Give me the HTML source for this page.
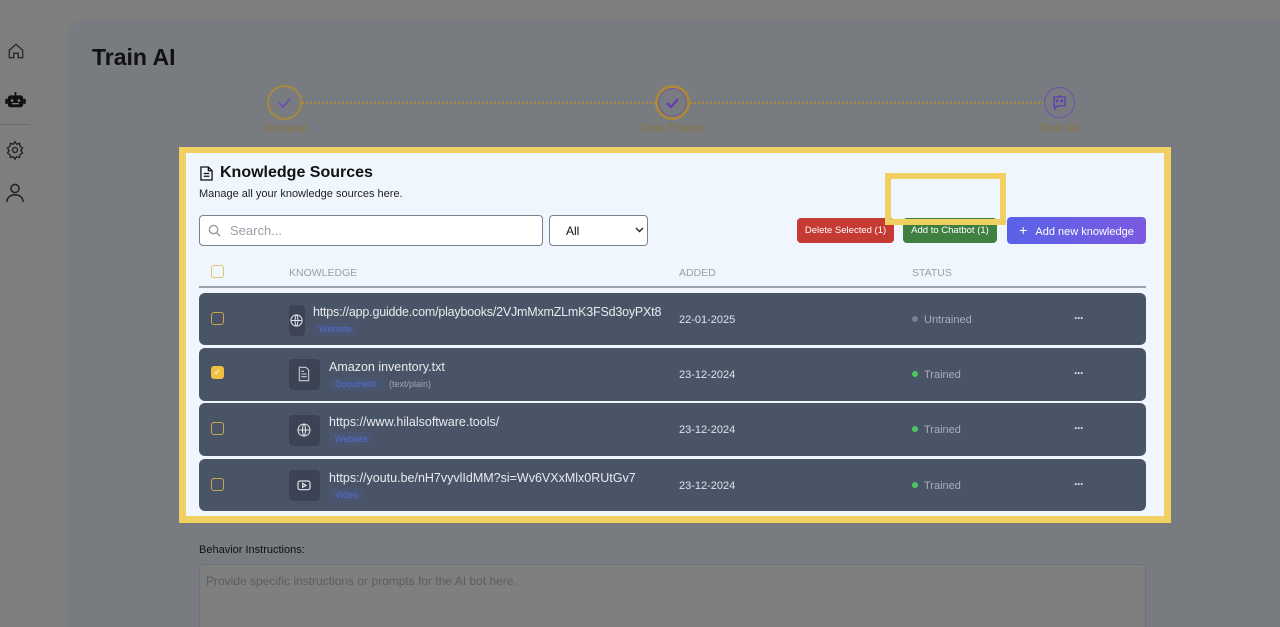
<!DOCTYPE html>
<html style="overflow:hidden;height:627px"><head><style>
*{box-sizing:border-box;margin:0;padding:0}
html,body{width:1280px;height:627px;overflow:hidden}
body{background:#7e7e7e;font-family:"Liberation Sans",sans-serif;position:relative}
.a{position:absolute}
.panel{left:68px;top:20px;width:1212px;height:607px;background:#787b80;border-radius:16px 0 0 0}
.row{position:absolute;left:199px;width:947px;background:#4a5467;border-radius:6px;color:#e6e8ec}
.cb{position:absolute;left:12px;width:13px;height:13px;border:1.5px solid #c9a64a;border-radius:3px}
.ic{position:absolute;left:90px;width:31px;height:31px;background:#3b4354;border-radius:4px}
.ic svg{position:absolute;left:7px;top:7px}
.t{position:absolute;font-size:12.5px;color:#e8eaee;white-space:nowrap}
.tag{position:absolute;font-size:9px;color:#4b6fd8;background:#4a5570;padding:2px 6px;border-radius:3px}
.date{position:absolute;left:480px;font-size:11px;color:#e0e3e8}
.st{position:absolute;left:713px;font-size:11px;color:#a9afb9}
.dot{display:inline-block;width:6px;height:6px;border-radius:50%;margin-right:6px;vertical-align:1px}
.more{position:absolute;left:875px;font-size:12px;color:#e5e7eb;letter-spacing:-1px;font-weight:bold}
.btn{position:absolute;top:218px;height:25px;border-radius:4px;color:#fff;font-size:9.5px;text-align:center;line-height:25px;white-space:nowrap}
</style></head><body>
<div class="a panel"></div>
<svg class="a" style="left:7px;top:42px" width="18" height="18" viewBox="0 0 24 24" fill="none" stroke="#222" stroke-width="1.6"><path d="M3 11l9-8 9 8v10h-6v-6h-6v6H3z"/></svg>
<svg class="a" style="left:5px;top:92px" width="21" height="17" viewBox="0 0 24 20"><rect x="11" y="0" width="2" height="4" fill="#111"/><rect x="3" y="4" width="18" height="14" rx="3" fill="#111"/><rect x="0" y="8" width="3" height="6" fill="#111"/><rect x="21" y="8" width="3" height="6" fill="#111"/><circle cx="8" cy="10" r="1.5" fill="#888"/><circle cx="16" cy="10" r="1.5" fill="#888"/><rect x="8" y="13" width="8" height="1.5" fill="#888"/></svg>
<div class="a" style="left:0;top:124px;width:30px;height:1px;background:#6d6d6d"></div>
<svg class="a" style="left:5px;top:140px" width="20" height="20" viewBox="0 0 24 24" fill="none" stroke="#222" stroke-width="1.6"><circle cx="12" cy="12" r="3"/><path d="M12 2l2 3 3.5-1 .5 3.5 3 2-2 3 2 3-3 2-.5 3.5-3.5-1-2 3-2-3-3.5 1L6 17.5l-3-2 2-3-2-3 3-2 .5-3.5 3.5 1z"/></svg>
<svg class="a" style="left:6px;top:183px" width="18" height="20" viewBox="0 0 20 22" fill="none" stroke="#222" stroke-width="1.7"><circle cx="10" cy="6" r="4.5"/><path d="M1 21c0-5 4-8 9-8s9 3 9 8"/></svg>

<div class="a" style="left:92px;top:44px;font-size:23px;font-weight:bold;color:#111">Train AI</div>
<div class="a" style="left:285px;top:102px;width:775px;border-top:2px dotted #a88a3a"></div>
<div class="a" style="left:267px;top:85px;width:35px;height:35px;border-radius:50%;border:2px solid #a88a3a;background:#787b80"></div>
<svg class="a" style="left:276px;top:94px" width="17" height="17" viewBox="0 0 17 17" fill="none" stroke="#7050b0" stroke-width="2"><path d="M3 9l4 4 7-8"/></svg>
<div class="a" style="left:264px;top:121px;font-size:12px;color:#8a7440">General</div>
<div class="a" style="left:655px;top:85px;width:35px;height:35px;border-radius:50%;border:3px solid #a88a3a;background:#787b80;box-shadow:inset 0 0 0 1px #7050b0"></div>
<svg class="a" style="left:664px;top:94px" width="17" height="17" viewBox="0 0 17 17" fill="none" stroke="#6040b0" stroke-width="2.2"><path d="M3 9l4 4 7-8"/></svg>
<div class="a" style="left:639px;top:121px;font-size:12px;color:#8a7440">Chat Theme</div>
<div class="a" style="left:1044px;top:87px;width:31px;height:31px;border-radius:50%;border:1.5px solid #7050b0;background:#787b80"></div>
<svg class="a" style="left:1050px;top:93px" width="19" height="19" viewBox="0 0 24 24" fill="none" stroke="#6040b0" stroke-width="1.8"><path d="M12 2v3M5 5h14v11H10l-4 4v-4H5z"/><circle cx="9" cy="10" r="1" fill="#6040b0"/><circle cx="15" cy="10" r="1" fill="#6040b0"/></svg>
<div class="a" style="left:1038px;top:121px;font-size:12px;color:#8a7440">Train AI</div>

<div class="a" style="left:179px;top:147px;width:992px;height:376px;background:#f0d060"></div>
<div class="a" style="left:186px;top:153px;width:978px;height:363px;background:#eff6fd"></div>
<svg class="a" style="left:200px;top:166px" width="13" height="15" viewBox="0 0 14 16" fill="none" stroke="#111" stroke-width="1.4"><path d="M1 1h8l4 4v10H1z M9 1v4h4 M4 8h6 M4 11h6"/></svg>
<div class="a" style="left:220px;top:164px;font-size:16px;font-weight:bold;color:#111">Knowledge Sources</div>
<div class="a" style="left:199px;top:188px;font-size:11px;color:#222">Manage all your knowledge sources here.</div>
<div class="a" style="left:199px;top:215px;width:344px;height:31px;background:#fff;border:1.5px solid #7a8290;border-radius:4px"></div>
<svg class="a" style="left:208px;top:224px" width="13" height="13" viewBox="0 0 14 14" fill="none" stroke="#999" stroke-width="1.5"><circle cx="6" cy="6" r="4.5"/><path d="M9.5 9.5L13 13"/></svg>
<div class="a" style="left:230px;top:223px;font-size:13px;color:#9aa0a8">Search...</div>
<div class="a" style="left:549px;top:215px;width:99px;height:31px;background:#fff;border:1.5px solid #7a8290;border-radius:4px"></div>
<div class="a" style="left:566px;top:224px;font-size:12px;color:#111">All</div>
<svg class="a" style="left:635px;top:227px" width="9" height="6" viewBox="0 0 9 6" fill="none" stroke="#222" stroke-width="1.4"><path d="M1 1l3.5 3.5L8 1"/></svg>

<div class="btn" style="left:797px;width:97px;background:#c53a32">Delete Selected (1)</div>
<div class="btn" style="left:903px;width:94px;background:#3f8040">Add to Chatbot (1)</div>
<div class="btn" style="left:1007px;top:217px;width:139px;height:27px;line-height:27px;background:linear-gradient(90deg,#5a62e8,#7a5ae0);font-size:11px"><span style="font-size:14px;margin-right:8px">+</span>Add new knowledge</div>
<div class="a" style="left:885px;top:173px;width:121px;height:52px;border:6px solid #f0d060"></div>

<div class="a" style="left:211px;top:265px;width:13px;height:13px;border:1.5px solid #e4c36a;border-radius:3px"></div>
<div class="a" style="left:289px;top:267px;font-size:10.5px;color:#9aa0aa">KNOWLEDGE</div>
<div class="a" style="left:679px;top:267px;font-size:10.5px;color:#9aa0aa">ADDED</div>
<div class="a" style="left:912px;top:267px;font-size:10.5px;color:#9aa0aa">STATUS</div>
<div class="a" style="left:199px;top:286px;width:947px;height:2px;background:#9aa2ae"></div>

<div class="row" style="top:293px;height:52px">
<div class="cb" style="top:19px"></div>
<div class="ic" style="top:12px;width:16px;height:31px"><svg style="left:0;top:8px" width="15" height="15" viewBox="0 0 24 24" fill="none" stroke="#e0e3e8" stroke-width="1.6"><circle cx="12" cy="12" r="9"/><path d="M3 12h18M12 3c3 3 3 15 0 18M12 3c-3 3-3 15 0 18"/></svg></div>
<div class="t" style="left:114px;top:12px;letter-spacing:-0.2px">https://app.guidde.com/playbooks/2VJmMxmZLmK3FSd3oyPXt8</div>
<div class="tag" style="left:114px;top:29px">Website</div>
<div class="date" style="top:21px">22-01-2025</div>
<div class="st" style="top:21px"><span class="dot" style="background:#7c828c"></span>Untrained</div>
<div class="more" style="top:18px">···</div></div>

<div class="row" style="top:348px;height:53px">
<div class="cb" style="top:18px;background:#f0c040;border-color:#f0c040;color:#fff;font-size:9px;line-height:10px;text-align:center">✓</div>
<div class="ic" style="top:11px"><svg width="16" height="16" viewBox="0 0 24 24" fill="none" stroke="#c9ced6" stroke-width="1.6"><path d="M5 2h10l4 4v16H5z M8 12h8 M8 16h8 M8 8h4"/></svg></div>
<div class="t" style="left:130px;top:12px">Amazon inventory.txt</div>
<div class="tag" style="left:130px;top:29px">Document</div>
<div class="a" style="left:190px;top:31px;font-size:9px;color:#a0a6b0">(text/plain)</div>
<div class="date" style="top:21px">23-12-2024</div>
<div class="st" style="top:21px"><span class="dot" style="background:#4cc860"></span>Trained</div>
<div class="more" style="top:18px">···</div></div>

<div class="row" style="top:403px;height:53px">
<div class="cb" style="top:19px"></div>
<div class="ic" style="top:12px"><svg width="16" height="16" viewBox="0 0 24 24" fill="none" stroke="#e0e3e8" stroke-width="1.6"><circle cx="12" cy="12" r="9"/><path d="M3 12h18M12 3c3 3 3 15 0 18M12 3c-3 3-3 15 0 18"/></svg></div>
<div class="t" style="left:130px;top:12px">https://www.hilalsoftware.tools/</div>
<div class="tag" style="left:130px;top:29px">Website</div>
<div class="date" style="top:21px">23-12-2024</div>
<div class="st" style="top:21px"><span class="dot" style="background:#4cc860"></span>Trained</div>
<div class="more" style="top:18px">···</div></div>

<div class="row" style="top:459px;height:52px">
<div class="cb" style="top:19px"></div>
<div class="ic" style="top:11px"><svg width="16" height="16" viewBox="0 0 24 24" fill="none" stroke="#e0e3e8" stroke-width="1.8"><rect x="3" y="6" width="18" height="13" rx="3"/><path d="M10 9.5v6l5-3z"/></svg></div>
<div class="t" style="left:130px;top:12px">https://youtu.be/nH7vyvlIdMM?si=Wv6VXxMlx0RUtGv7</div>
<div class="tag" style="left:130px;top:29px">Video</div>
<div class="date" style="top:21px">23-12-2024</div>
<div class="st" style="top:21px"><span class="dot" style="background:#4cc860"></span>Trained</div>
<div class="more" style="top:18px">···</div></div>

<div class="a" style="left:199px;top:544px;font-size:11px;color:#111">Behavior Instructions:</div>
<div class="a" style="left:199px;top:564px;width:947px;height:70px;background:#7f7f7f;border:1px solid #6e7176;border-radius:4px"></div>
<div class="a" style="left:206px;top:574px;font-size:12px;color:#5a5d62">Provide specific instructions or prompts for the AI bot here.</div>
</body></html>
